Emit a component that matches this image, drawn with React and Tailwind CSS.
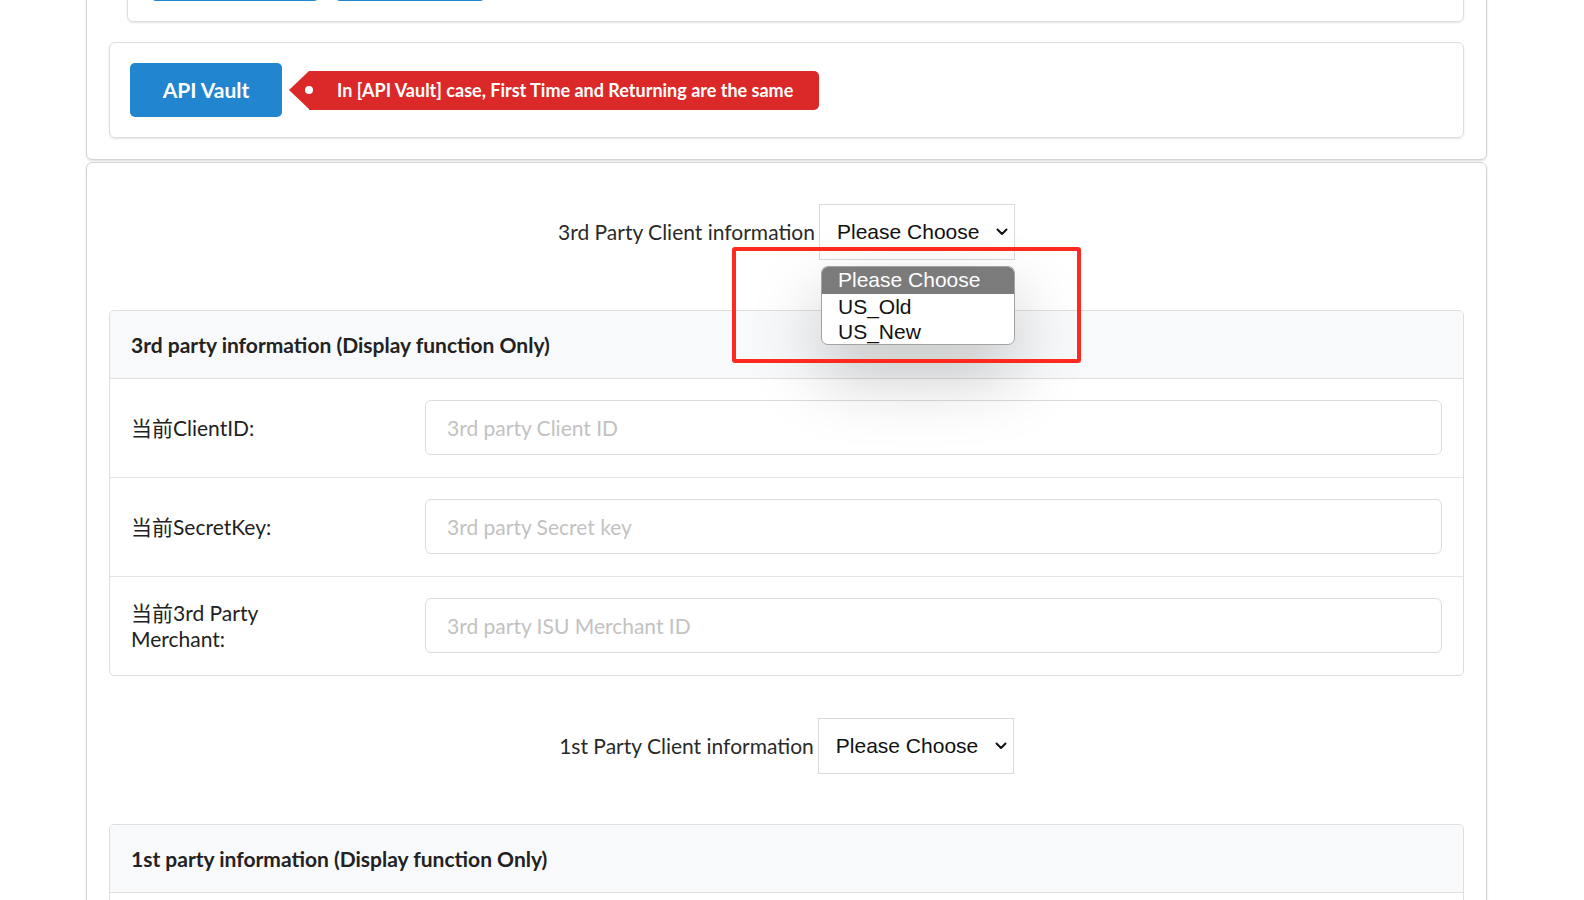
import { useState } from 'react'

const thirdRows = [
  { label: '当前ClientID:', placeholder: '3rd party Client ID' },
  { label: '当前SecretKey:', placeholder: '3rd party Secret key' },
  { label: '当前3rd Party Merchant:', placeholder: '3rd party ISU Merchant ID' },
]

const firstRows = [
  { label: '当前ClientID:', placeholder: '1st party Client ID' },
  { label: '当前SecretKey:', placeholder: '1st party Secret key' },
]

function Chevron() {
  return (
    <svg width="12" height="8" viewBox="0 0 12 8" className="shrink-0">
      <path d="M1.5 1.5 L6 6 L10.5 1.5" fill="none" stroke="#111" strokeWidth="2" strokeLinecap="round" strokeLinejoin="round" />
    </svg>
  )
}

function FakeSelect({ value }) {
  return (
    <div className="inline-flex items-center justify-between w-[196px] h-[56px] pl-[17px] pr-[6px] border border-[#dadada] bg-white font-['Liberation_Sans',Arial,sans-serif] text-[21px] text-[#111]">
      <span>{value}</span>
      <Chevron />
    </div>
  )
}

function InfoPanel({ title, rows }) {
  return (
    <div className="border border-[#dedede] rounded-[5px] overflow-hidden bg-white">
      <div className="h-[68px] flex items-center px-[21px] bg-[#f8f9fa] border-b border-[#dedede]">
        <h3 className="text-[21px] font-bold text-[#222]">{title}</h3>
      </div>
      {rows.map((r, i) => (
        <div
          key={r.label}
          className={`flex items-center px-[21px] pt-[21px] pb-[22px] ${i > 0 ? 'border-t border-[#e5e5e5]' : ''}`}
        >
          <div className="w-[294px] shrink-0 text-[21px] leading-[26px] text-[#222]">
            <span className="block max-w-[180px]">{r.label}</span>
          </div>
          <input
            readOnly
            placeholder={r.placeholder}
            className="flex-1 h-[55px] px-[21px] text-[21px] border border-[#dcdcdc] rounded-[6px] outline-none placeholder:text-[#c2c2c2] bg-white"
          />
        </div>
      ))}
    </div>
  )
}

export default function App() {
  const [open] = useState(true)

  return (
    <div className="min-h-screen bg-white overflow-hidden font-[Lato,'Noto_Sans_CJK_SC',sans-serif]">
      <div className="ml-[86px] w-[1401px] -mt-[93px]">
        {/* Upper segment */}
        <div className="border border-[#d4d4d5] rounded-[6px] px-[22px] pt-[22px] pb-[21px] shadow-[0_1px_2px_rgba(34,36,38,0.15)]">
          <div className="ml-[18px] border border-[#dedede] rounded-[6px] px-[23px] pt-[20px] pb-[20px] shadow-[0_1px_2px_rgba(34,36,38,0.12)]">
            <div className="flex gap-[16px]">
              <div className="w-[168px] h-[50px] rounded-[5px] bg-[#2185d0]" />
              <div className="w-[150px] h-[50px] rounded-[5px] bg-[#2185d0]" />
            </div>
          </div>

          <div className="mt-[20px] border border-[#dedede] rounded-[6px] px-[20px] py-[20px] shadow-[0_1px_2px_rgba(34,36,38,0.12)]">
            <div className="flex items-center">
              <button className="w-[152px] h-[54px] rounded-[5px] bg-[#2185d0] text-white text-[21px] font-bold">
                API Vault
              </button>
              <div className="ml-[7px] flex items-center">
                <div className="w-0 h-0 border-y-[19.5px] border-y-transparent border-r-[20px] border-r-[#db2828]" />
                <div className="relative h-[39px] flex items-center bg-[#db2828] rounded-r-[5px] pl-[28px] pr-[26px] text-white text-[18px] font-bold">
                  <span className="absolute left-[-4px] top-1/2 -translate-y-1/2 w-[8px] h-[8px] rounded-full bg-white" />
                  In [API Vault] case, First Time and Returning are the same
                </div>
              </div>
            </div>
          </div>
        </div>

        {/* Lower segment */}
        <div className="relative mt-[2px] border border-[#d4d4d5] rounded-[6px] px-[22px] pt-[41px] pb-[40px] shadow-[0_1px_2px_rgba(34,36,38,0.15)]">
          <div className="flex items-center justify-center gap-[4px]">
            <span className="text-[21px] text-[#2a2a2a]">3rd Party Client information</span>
            <FakeSelect value="Please Choose" />
          </div>

          {open && (
            <>
              <div className="absolute left-[734px] top-[103px] w-[194px] h-[79px] z-10 rounded-[7px] border border-[#a3a3a3] bg-white overflow-hidden shadow-[0_30px_70px_rgba(0,0,0,0.22)] font-['Liberation_Sans',Arial,sans-serif] text-[21px] text-[#111] leading-[25px]">
                <div className="h-[27px] pl-[16px] bg-[#7b7b7b] text-white">Please Choose</div>
                <div className="pl-[16px]">US_Old</div>
                <div className="pl-[16px]">US_New</div>
              </div>
              <div className="absolute left-[645px] top-[84px] w-[349px] h-[116px] z-20 border-[4px] border-[#ff2a1f] rounded-[3px]" />
            </>
          )}

          <div className="mt-[50px]">
            <InfoPanel title="3rd party information (Display function Only)" rows={thirdRows} />
          </div>

          <div className="mt-[42px] flex items-center justify-center gap-[4px]">
            <span className="text-[21px] text-[#2a2a2a]">1st Party Client information</span>
            <FakeSelect value="Please Choose" />
          </div>

          <div className="mt-[50px]">
            <InfoPanel title="1st party information (Display function Only)" rows={firstRows} />
          </div>
        </div>
      </div>
    </div>
  )
}
